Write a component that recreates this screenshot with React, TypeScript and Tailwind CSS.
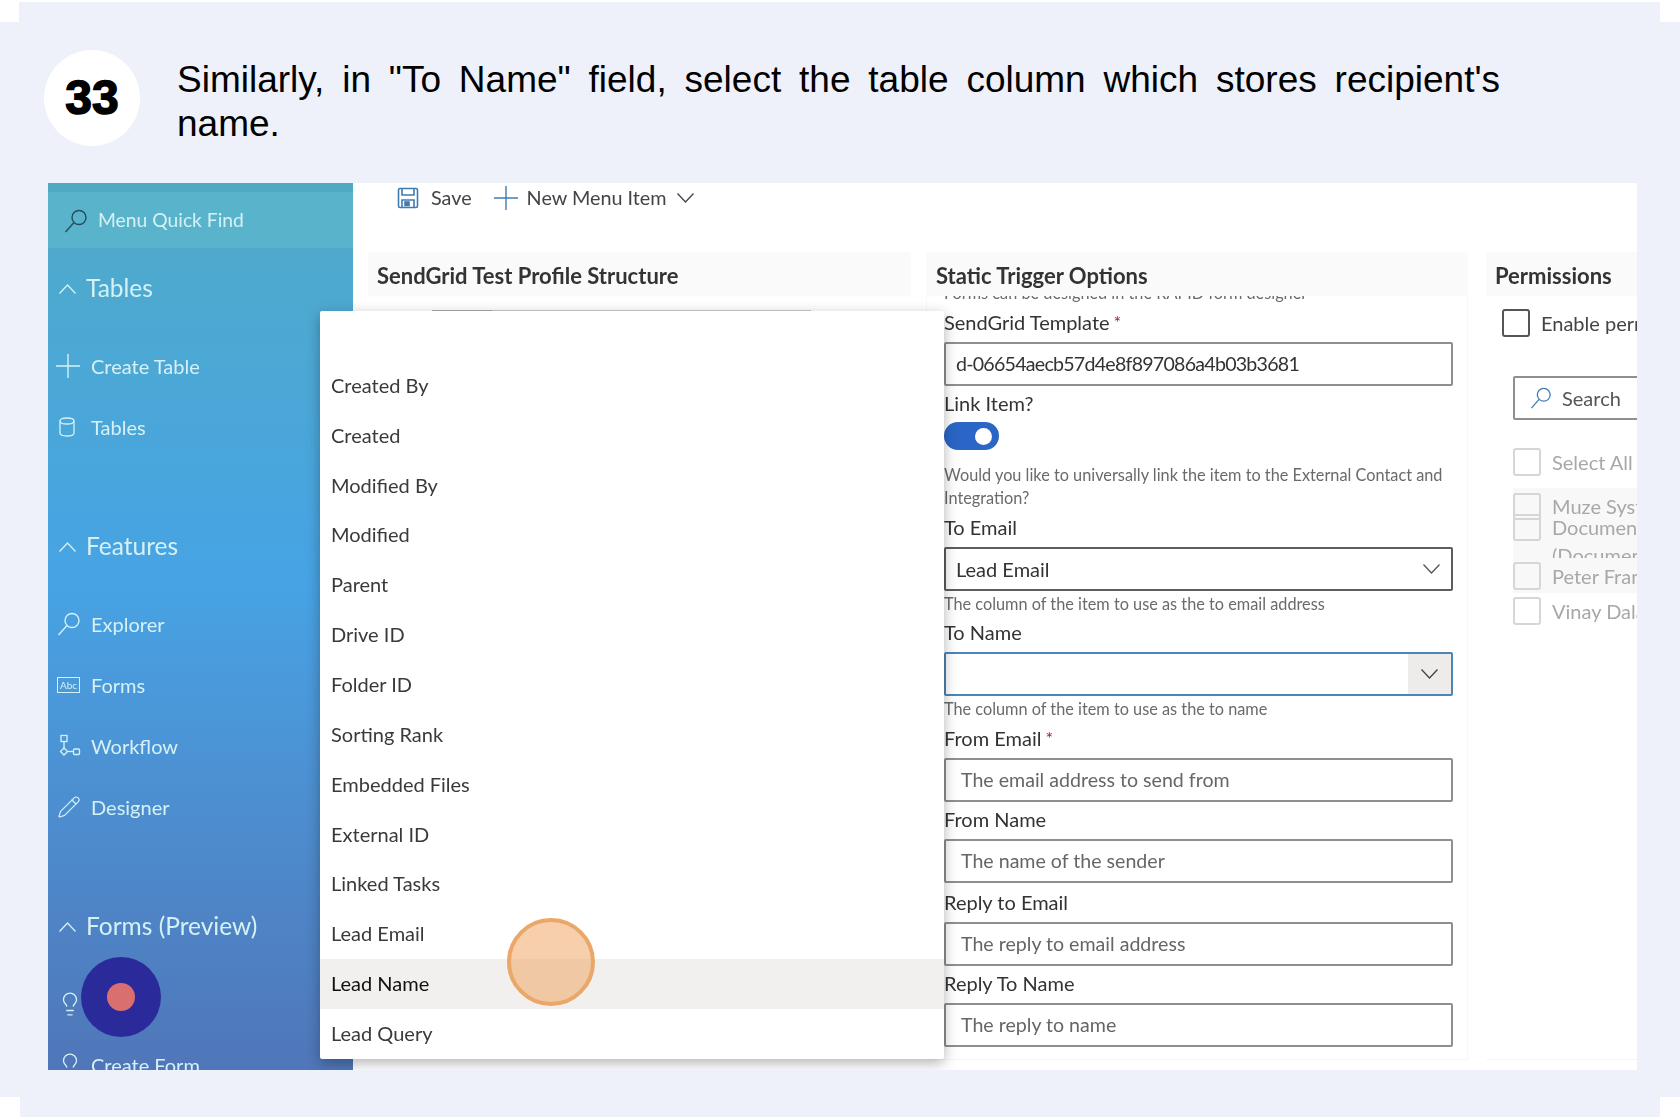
import { Lightbulb, Pencil } from 'lucide-react'
import type { ReactNode } from 'react'

const columns = [
    'Created By',
    'Created',
    'Modified By',
    'Modified',
    'Parent',
    'Drive ID',
    'Folder ID',
    'Sorting Rank',
    'Embedded Files',
    'External ID',
    'Linked Tasks',
    'Lead Email',
    'Lead Name',
    'Lead Query',
]

const TableIcon = () => (
    <svg width="20" height="22" viewBox="0 0 20 22" fill="none" stroke="currentColor" strokeWidth="1.3">
        <path d="M3 5c0-2 2-3 7-3s7 1 7 3v12c0 2-2 3-7 3s-7-1-7-3z" />
        <path d="M3 5c0 2 2 3 7 3s7-1 7-3" />
    </svg>
)

const FormIcon = () => (
    <div className="w-[23px] h-[16px] border border-current flex items-center justify-center text-[10px] leading-none">
        Abc
    </div>
)

const WorkflowIcon = () => (
    <svg width="24" height="24" viewBox="0 0 24 24" fill="none" stroke="currentColor" strokeWidth="1.3">
        <rect x="4" y="1.5" width="6" height="6" />
        <path d="M7 7.5v7" />
        <path d="M7 14l3.5 3.5L7 21l-3.5-3.5z" />
        <path d="M10.5 17.5h6" />
        <rect x="16.5" y="15" width="6" height="5.5" rx="1" />
    </svg>
)

const QuickSearch = ({ size = 24, className = '' }: { size?: number; className?: string }) => (
    <svg width={size} height={size} viewBox="0 0 24 24" fill="none" stroke="currentColor" strokeWidth="1.4" className={className}>
        <circle cx="15" cy="8.5" r="7" />
        <path d="M10 13.5L1.5 23" />
    </svg>
)

const PlusIcon = ({ className = '' }: { className?: string }) => (
    <svg width="24" height="24" viewBox="0 0 24 24" fill="none" stroke="currentColor" strokeWidth="1.4" className={className}>
        <path d="M12 0v24M0 12h24" />
    </svg>
)

const Chevron = ({ up, className = '' }: { up?: boolean; className?: string }) => (
    <svg width="17" height="10" viewBox="0 0 17 10" fill="none" stroke="currentColor" strokeWidth="1.3" className={className}>
        <path d={up ? 'M0.5 9.5L8.5 1l8 8.5' : 'M0.5 0.5L8.5 9l8-8.5'} />
    </svg>
)

const SaveIcon = () => (
    <svg width="22" height="22" viewBox="0 0 22 22" fill="none" stroke="#3f7cb3" strokeWidth="1.6">
        <rect x="1.5" y="1.5" width="19" height="19" rx="1.5" />
        <path d="M5 2v6h12V2" />
        <path d="M5 20v-7h12v7" />
        <rect x="8" y="15" width="4" height="3.5" fill="#3f7cb3" />
    </svg>
)

const NavItem = ({ icon, label }: { icon: ReactNode; label: string }) => (
    <div className="h-[61px] flex items-center text-[20px]">
        <div className="w-[43px] pl-[9px] flex justify-start shrink-0">{icon}</div>
        <span>{label}</span>
    </div>
)

const NavHeading = ({ label }: { label: string }) => (
    <div className="h-[61px] flex items-center text-[24.5px] mb-[16px]">
        <Chevron up className="ml-[11px] mr-[10px]" />
        <span>{label}</span>
    </div>
)

const Sidebar = () => (
    <aside className="w-[305px] shrink-0 h-full overflow-hidden text-[#d6f1f6] bg-linear-to-b from-[#50abc8] via-[#47a3e4] via-45% to-[#4f76b8]">
        <div className="h-[9px] bg-[#4fa9c2]" />
        <div className="h-[56px] flex items-center pl-[16px] pt-[1px] gap-[10px] text-[19.3px] bg-[#59b3ca]">
            <QuickSearch className="text-[#274b5c]" />
            <span>Menu Quick Find</span>
        </div>
        <div className="pt-[10px]">
            <NavHeading label="Tables" />
            <NavItem icon={<PlusIcon className="-ml-[1px]" />} label="Create Table" />
            <NavItem icon={<TableIcon />} label="Tables" />
            <div className="h-[59px]" />
            <NavHeading label="Features" />
            <NavItem icon={<QuickSearch />} label="Explorer" />
            <NavItem icon={<FormIcon />} label="Forms" />
            <NavItem icon={<WorkflowIcon />} label="Workflow" />
            <NavItem icon={<Pencil size={24} strokeWidth={1.2} />} label="Designer" />
            <div className="h-[59px]" />
            <NavHeading label="Forms (Preview)" />
            <NavItem icon={<Lightbulb size={26} strokeWidth={1.2} />} label="Quotes" />
            <NavItem icon={<Lightbulb size={26} strokeWidth={1.2} />} label="Create Form" />
        </div>
    </aside>
)

const Label = ({ text, required }: { text: string; required?: boolean }) => (
    <div className="h-[37px] pb-[5px] flex items-end text-[20px] leading-[30px] text-[#333]">
        {text}
        {required && <span className="text-[#a4262c] text-[18px] ml-[4px] self-start mt-[2px]">*</span>}
    </div>
)

const TextField = ({ value, placeholder }: { value?: string; placeholder?: string }) => (
    <div className="h-[44px] border-2 border-[#8f8f8f] rounded-[2px] flex items-center bg-white text-[19.6px]">
        {value ? (
            <span className="pl-[10px] text-[#333] tracking-[-0.75px]">{value}</span>
        ) : (
            <span className="pl-[15px] text-[#666]">{placeholder}</span>
        )}
    </div>
)

const Help = ({ children }: { children: ReactNode }) => (
    <div className="text-[16.3px] leading-[23px] text-[#6a6a6a]">{children}</div>
)

const FormCard = () => (
    <section className="w-[542px] ml-[15px] shrink-0 flex flex-col border-b border-[#f6f6f6]">
        <h2 className="h-[44px] shrink-0 bg-[#fafafa] px-[10px] pt-[2px] flex items-center text-[22px] font-bold text-[#333] rounded-t-[3px]">
            Static Trigger Options
        </h2>
        <div className="flex-1 overflow-hidden px-[17px] border-x border-[#f8f8f8]">
            <div className="-mt-[11px] h-[16px] text-[16.3px] leading-[16px] text-[#6a6a6a] whitespace-nowrap">
                Forms can be designed in the RAPID form designer
            </div>
            <div className="w-[509px] mt-[4px]">
                <Label text="SendGrid Template" required />
                <TextField value="d-06654aecb57d4e8f897086a4b03b3681" />
                <Label text="Link Item?" />
                <div className="w-[55px] h-[28px] -mt-[1px] bg-[#2b66c6] rounded-full flex items-center justify-end pr-[7px]">
                    <div className="w-[17px] h-[17px] rounded-full bg-white" />
                </div>
                <div className="mt-[13px]">
                    <Help>Would you like to universally link the item to the External Contact and Integration?</Help>
                </div>
                <div className="mt-[1px]">
                    <Label text="To Email" />
                </div>
                <div className="h-[44px] border-2 border-[#5d5d5d] rounded-[2px] flex items-center justify-between text-[20px] text-[#333] pl-[10px] pr-[11px]">
                    Lead Email
                    <Chevron className="text-[#555]" />
                </div>
                <div className="mt-[1px] h-[23px]">
                    <Help>The column of the item to use as the to email address</Help>
                </div>
                <Label text="To Name" />
                <div className="h-[44px] border-2 border-[#4a86b8] rounded-[2px] flex justify-end overflow-hidden">
                    <div className="w-[43px] bg-[#edeceb] flex items-center justify-center">
                        <Chevron className="text-[#444]" />
                    </div>
                </div>
                <div className="mt-[1px] h-[23px]">
                    <Help>The column of the item to use as the to name</Help>
                </div>
                <div className="mt-[1px]">
                    <Label text="From Email" required />
                </div>
                <TextField placeholder="The email address to send from" />
                <Label text="From Name" />
                <TextField placeholder="The name of the sender" />
                <div className="mt-[2px]">
                    <Label text="Reply to Email" />
                </div>
                <TextField placeholder="The reply to email address" />
                <Label text="Reply To Name" />
                <TextField placeholder="The reply to name" />
            </div>
        </div>
    </section>
)

const PermissionRow = ({ label }: { label: string }) => (
    <div className="flex gap-[11px] h-[35px] items-center">
        <div className="w-[28px] h-[28px] shrink-0 border-2 border-[#d6d6d6] rounded-[3px]" />
        <span className="whitespace-nowrap text-[20px] leading-[28px] text-[#a8a8a8]">{label}</span>
    </div>
)

// these two overlap each other in the reference, the row is shorter than its checkbox
const SqueezedRow = ({ label }: { label: string }) => (
    <div className="flex gap-[11px] h-[21px]">
        <div className="w-[28px] h-[27px] shrink-0 border-2 border-[#d6d6d6] rounded-[3px]" />
        <span className="whitespace-nowrap text-[20px] leading-[21px] pt-[3px] text-[#a8a8a8]">{label}</span>
    </div>
)

const PermissionsCard = () => (
    <section className="flex-1 ml-[18px] min-w-[170px] flex flex-col overflow-hidden border-b border-[#f6f6f6]">
        <h2 className="h-[44px] shrink-0 bg-[#fafafa] px-[9px] pt-[2px] flex items-center text-[22px] font-bold text-[#333] rounded-t-[3px]">
            Permissions
        </h2>
        <div className="flex items-center gap-[11px] pl-[16px] mt-[12px] whitespace-nowrap text-[20px] text-[#444]">
            <div className="w-[28px] h-[28px] shrink-0 border-2 border-[#555] rounded-[3px]" />
            Enable permissions
        </div>
        <div className="ml-[27px] mt-[38px] w-[200px] h-[44px] shrink-0 border-2 border-[#8f8f8f] rounded-[2px] flex items-center pl-[15px] gap-[10px] text-[20px] text-[#555]">
            <QuickSearch size={22} className="text-[#3f7cb3]" />
            Search
        </div>
        <div className="ml-[27px] mt-[24px]">
            <PermissionRow label="Select All" />
            <div className="mt-[9px] bg-[#f8f8f8] pt-[5px]">
                <SqueezedRow label="Muze Systems" />
                <SqueezedRow label="Documents" />
                <div className="h-[23px] overflow-hidden pl-[39px] pt-[10px] text-[20px] leading-[21px] text-[#a8a8a8] whitespace-nowrap">
                    (Documents)
                </div>
                <PermissionRow label="Peter Franklin" />
            </div>
            <PermissionRow label="Vinay Dalal" />
        </div>
    </section>
)

const ProfileCard = () => (
    <section className="w-[543px] ml-[15px] shrink-0">
        <h2 className="h-[44px] bg-[#fafafa] px-[9px] pt-[2px] flex items-center text-[22px] font-bold text-[#333] rounded-t-[3px]">
            SendGrid Test Profile Structure
        </h2>
        <div className="mt-[14px] ml-[64px] w-[379px] flex h-[2px] bg-[#ccc]">
            <div className="w-[60px] bg-[#aaa]" />
        </div>
    </section>
)

const ColumnDropdown = () => (
    <div className="absolute left-[272px] top-[128px] w-[624px] h-[748px] pt-[50px] bg-white rounded-[2px] shadow-[0_4px_14px_rgba(0,0,0,0.3)] z-10">
        {columns.map((name) => (
            <div
                key={name}
                className={`h-[49.85px] pb-[2px] flex items-center pl-[11px] text-[20px] ${name === 'Lead Name' ? 'bg-[#f1f0ee] text-[#111]' : 'text-[#3a3a3a]'}`}
            >
                {name}
            </div>
        ))}
    </div>
)

export default function App() {
    return (
        <div className="relative w-[1680px] h-[1117px] overflow-hidden bg-[#eef1f9] font-['Lato',sans-serif]">
            {/* white edges of the capture */}
            <div className="absolute left-0 top-0 w-full h-[2px] bg-white" />
            <div className="absolute left-0 top-0 w-[19px] h-[22px] bg-white" />
            <div className="absolute right-0 top-0 w-[20px] h-[22px] bg-white" />
            <div className="absolute left-0 bottom-0 w-[20px] h-[20px] bg-white" />
            <div className="absolute right-0 bottom-0 w-[20px] h-[20px] bg-white" />

            <header className="flex items-start pl-[44px] pt-[50px] h-[183px] font-['Liberation_Sans',Arial,sans-serif]">
                <div className="w-[96px] h-[96px] rounded-full bg-white flex items-center justify-center text-[48px] font-bold text-black [-webkit-text-stroke:1.5px_black]">
                    33
                </div>
                <div className="ml-[37px] mt-[8px] w-[1323px] text-[37px] leading-[44px] text-black">
                    <p className="text-justify [text-align-last:justify]">
                        Similarly, in "To Name" field, select the table column which stores recipient's
                    </p>
                    <p>name.</p>
                </div>
            </header>

            {/* the reference is an upscaled capture, so everything in it is a little soft */}
            <div className="relative ml-[48px] w-[1589px] h-[887px] flex bg-white overflow-hidden blur-[0.5px]">
                <Sidebar />
                <main className="flex-1 min-w-0 flex flex-col">
                    <div className="h-[69px] shrink-0 flex items-start pl-[44px] pt-[4px] text-[19.8px] text-[#444]">
                        <div className="h-[22px] flex items-center gap-[12px]">
                            <SaveIcon />
                            <span>Save</span>
                        </div>
                        <div className="h-[22px] ml-[22px] flex items-center gap-[9px]">
                            <PlusIcon className="text-[#3f7cb3]" />
                            <span>New Menu Item</span>
                            <Chevron className="ml-[1px]" />
                        </div>
                    </div>
                    <div className="flex-1 min-h-0 flex pb-[10px]">
                        <ProfileCard />
                        <FormCard />
                        <PermissionsCard />
                    </div>
                </main>
                <ColumnDropdown />

                {/* recording marker and click marker */}
                <div className="absolute left-[33px] top-[774px] w-[80px] h-[80px] rounded-full bg-[#2b2a9b] flex items-center justify-center z-20">
                    <div className="w-[28px] h-[28px] rounded-full bg-[#d9706f]" />
                </div>
                <div className="absolute left-[459px] top-[735px] w-[88px] h-[88px] rounded-full border-[4px] border-[#eba767] bg-[#f0a05a]/50 z-20" />
            </div>
        </div>
    )
}
